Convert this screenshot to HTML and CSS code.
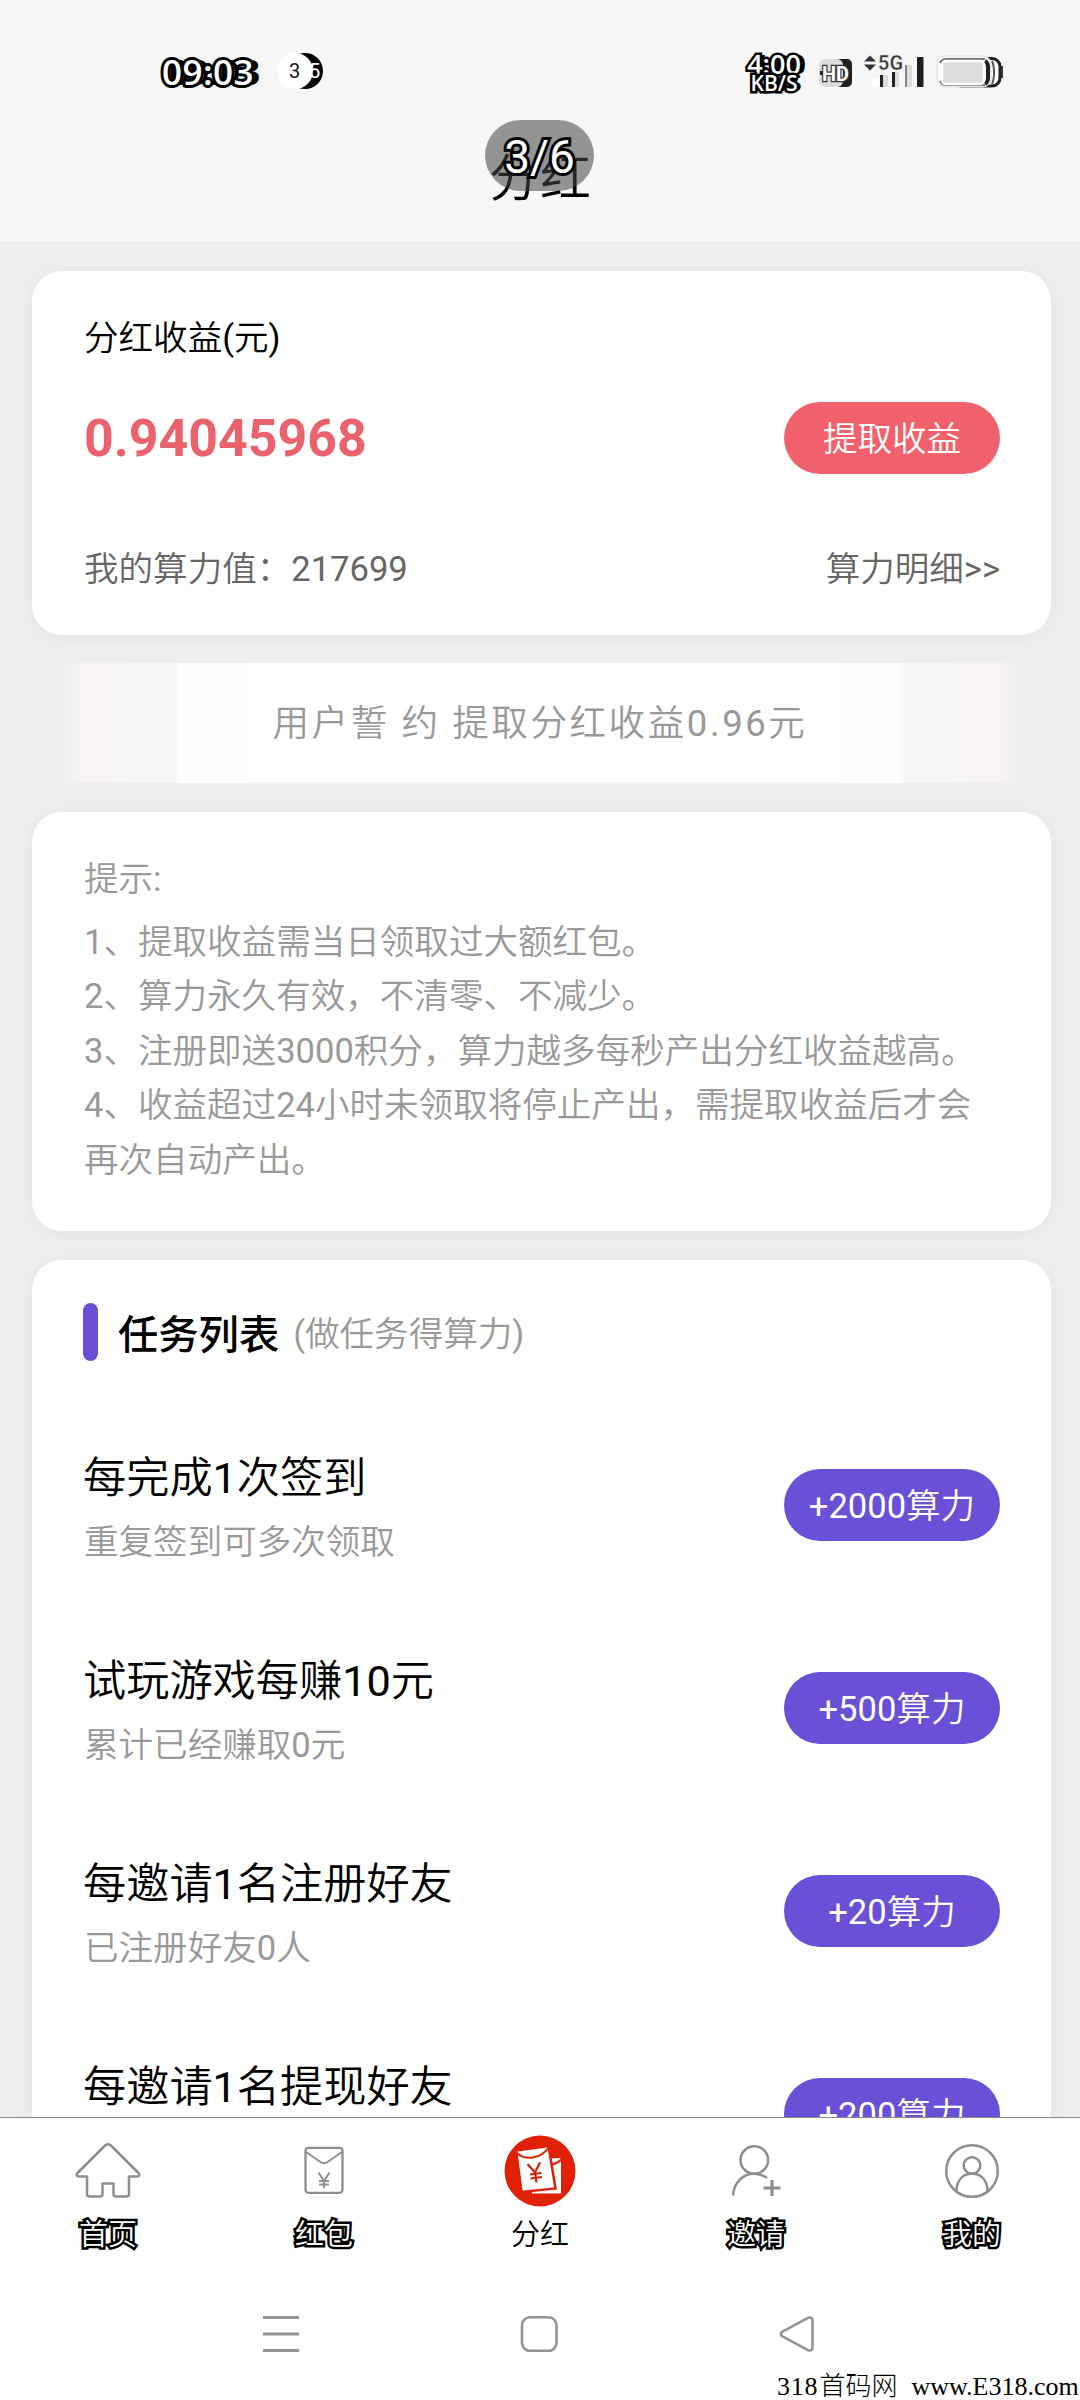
FILE: index.html
```html
<!DOCTYPE html>
<html lang="zh-CN">
<head>
<meta charset="utf-8">
<title>分红</title>
<link rel="stylesheet" href="styles.css">
</head>
<body>
<div class="screen">
  <header class="header">
    <div class="status">
      <span class="clock">09:03</span>
      <svg class="moon" width="50" height="40" viewBox="0 0 50 40">
        <circle cx="29" cy="20" r="18" fill="#050505"/>
        <text x="33" y="27" font-size="20" fill="#fff">5</text>
        <circle cx="19" cy="20" r="18" fill="#fff"/>
        <text x="13" y="26.500" font-size="20" fill="#111">3</text>
      </svg>
      <span class="speed"><b>4:00</b><i>KB/S</i></span>
      <svg class="signals" width="190" height="44" viewBox="0 0 190 44">
        <rect x="9" y="9" width="30" height="28" rx="5" fill="#202020"/>
        <rect x="6" y="9" width="24" height="28" rx="6" fill="#ddd"/>
        <path d="M7 23h6" stroke="#222" stroke-width="4"/>
        <text x="9" y="30.500" font-size="21" font-weight="700" fill="#fff" stroke="#333" stroke-width="2.500" paint-order="stroke" textLength="27" lengthAdjust="spacingAndGlyphs">HD</text>
        <path d="M51 11.500l6-6 6 6zM51 14.500l6 6 6-6z" fill="#333"/>
        <text x="65" y="20" font-size="20" font-weight="700" fill="#333" stroke="#ddd" stroke-width=".6">5G</text>
        <rect x="59" y="28" width="7" height="9" fill="#fff"/>
        <path d="M68 25h7v12h-7zM80 22h6v15h-6zM92 15h7v22h-7z" fill="#ddd"/>
        <path d="M67 25h3v12h-3zM79 22h3v15h-3z" fill="#222"/>
        <path d="M92 15h2v22h-2z" fill="#888"/>
        <rect x="104" y="7" width="6.500" height="30" rx="1" fill="#1d1d1d"/>
        <rect x="140" y="8.500" width="47" height="27.500" rx="8" fill="#fff" stroke="#222" stroke-width="3"/>
        <rect x="124" y="6" width="54" height="31" rx="8" fill="#f8f8f8" stroke="#ddd" stroke-width="1"/>
        <path d="M127 13q2-4 6-4h39M127 31q2 4 6 4h39" fill="none" stroke="#777" stroke-width="2"/>
        <path d="M172 11q3 2 3 6v11q0 4-3 6" fill="none" stroke="#222" stroke-width="4"/>
        <path d="M179 11q2 4 2 11.500t-2 11.500" fill="none" stroke="#555" stroke-width="2"/>
        <rect x="129" y="11" width="42" height="23" rx="4" fill="#ddd" stroke="#fff" stroke-width="2.500"/>
        <rect x="188" y="16" width="2" height="12" fill="#333"/>
      </svg>
    </div>
    <div class="titlebar">
      <h1>分红</h1>
      <div class="counter">3/6</div>
    </div>
  </header>

  <main class="content">
    <section class="card income">
      <div class="label">分红收益(元)</div>
      <div class="row amount-row">
        <strong class="amount">0.94045968</strong>
        <button class="pill red">提取收益</button>
      </div>
      <div class="row power">
        <span>我的算力值：217699</span>
        <a>算力明细&gt;&gt;</a>
      </div>
    </section>

    <div class="notice">用户誓 约 提取分红收益0.96元</div>

    <section class="card tips">
      <h2>提示:</h2>
      <p>1、提取收益需当日领取过大额红包。</p>
      <p>2、算力永久有效，不清零、不减少。</p>
      <p>3、注册即送3000积分，算力越多每秒产出分红收益越高。</p>
      <p>4、收益超过24小时未领取将停止产出，需提取收益后才会再次自动产出。</p>
    </section>

    <section class="card tasks">
      <div class="tasks-head"><span class="bar"></span><h2>任务列表</h2><span class="hint">(做任务得算力)</span></div>
      <div class="task">
        <div class="info"><h3>每完成1次签到</h3><p>重复签到可多次领取</p></div>
        <button class="pill">+2000算力</button>
      </div>
      <div class="task">
        <div class="info"><h3>试玩游戏每赚10元</h3><p>累计已经赚取0元</p></div>
        <button class="pill">+500算力</button>
      </div>
      <div class="task">
        <div class="info"><h3>每邀请1名注册好友</h3><p>已注册好友0人</p></div>
        <button class="pill">+20算力</button>
      </div>
      <div class="task">
        <div class="info"><h3>每邀请1名提现好友</h3><p>&nbsp;</p></div>
        <button class="pill">+200算力</button>
      </div>
    </section>
  </main>

  <nav class="tabs">
    <a class="tab">
      <svg width="72" height="72" viewBox="0 0 72 72" fill="none" stroke="#8e8e8e" stroke-width="2.500" stroke-linejoin="round"><path d="M33 10.500q3-2.500 6 0L66.500 38q2 3-1 3.500H57V59q0 2.500-2.500 2.500H44q-2.500 0-2.500-2.500V48.500h-11V59q0 2.500-2.500 2.500H17.500Q15 61.500 15 59V41.500H6.500q-3-.5-1-3.500z"/></svg>
      <span>首页</span>
    </a>
    <a class="tab">
      <svg width="72" height="72" viewBox="0 0 72 72" fill="none" stroke="#8e8e8e" stroke-width="2.300"><rect x="17.500" y="12.800" width="37" height="45" rx="3"/><path d="M18 17l14.500 10q3.500 2.500 7 0L54 17M30.500 37.500l5.500 8.500 5.500-8.500M36 46v7M31 46h10M31 49.500h10" stroke-width="2"/></svg>
      <span>红包</span>
    </a>
    <a class="tab active">
      <svg width="72" height="72" viewBox="0 0 72 72"><circle cx="36" cy="36" r="35.500" fill="#e12106"/><path d="M28 24l29-1V58.500H28z" fill="#fff"/><path d="M46 29.500q7 0 12-6" fill="none" stroke="#e12106" stroke-width="2"/><path d="M12 15.500L44.500 11l7 42.500L17.500 57z" fill="#fff" stroke="#e12106" stroke-width="2.500"/><path d="M13 18q6 6 16 4.500T45 12" fill="none" stroke="#e12106" stroke-width="2"/><path d="M23.500 29l7.500 8.500 5-10M31 37.500l1.500 10M26 39.500l11.500-1.500M26.500 43.500l11.500-1.500" fill="none" stroke="#cf2010" stroke-width="2.200"/></svg>
      <span>分红</span>
    </a>
    <a class="tab">
      <svg width="72" height="72" viewBox="0 0 72 72" fill="none" stroke="#8e8e8e" stroke-width="2.500"><circle cx="34.300" cy="25" r="13.800"/><path d="M13 60.500C14 47 23 38.800 34.300 38.800q7 0 12.700 4.200"/><path d="M52 45v16M43.500 53h17" stroke-width="3.200"/></svg>
      <span>邀请</span>
    </a>
    <a class="tab">
      <svg width="72" height="72" viewBox="0 0 72 72" fill="none" stroke="#8e8e8e" stroke-width="2.500"><circle cx="36" cy="36" r="25.800"/><circle cx="36" cy="30.500" r="8.300"/><path d="M20.500 56.500C20.500 46 26 38.800 36 38.800S51.500 46 51.500 56.500"/></svg>
      <span>我的</span>
    </a>
  </nav>

  <footer class="sysnav">
    <svg width="40" height="40" viewBox="0 0 40 40" stroke="#949494" stroke-width="3"><path d="M2 3.500h36M2 20h36M2 36.500h36"/></svg>
    <svg width="40" height="40" viewBox="0 0 40 40" fill="none" stroke="#949494" stroke-width="2.600"><rect x="2" y="3.300" width="34.500" height="33.500" rx="8"/></svg>
    <svg width="40" height="40" viewBox="0 0 40 40" fill="none" stroke="#949494" stroke-width="2.600" stroke-linejoin="round"><path d="M4.500 17.700L30 3.800q4.500-1.500 4.500 3v26.400q0 4.500-4.500 3L4.500 22.300q-3.500-2.300 0-4.600z"/></svg>
  </footer>
  <div class="watermark"><span class="num">318</span><span class="site">首码网</span><span>www.E318.com</span></div>
</div>
</body>
</html>
```
FILE: styles.css
```css
* { box-sizing: border-box; margin: 0; padding: 0; }
body {
  width: 1080px;
  height: 2400px;
  font-family: Roboto, "Noto Sans CJK SC DemiLight", "Noto Sans CJK SC", sans-serif;
  font-size: 34.56px;
  color: #000;
  background: #fff;
  overflow: hidden;
}
.screen { position: relative; display: flex; flex-direction: column; height: 2400px; }
h1, h2, h3 { font-weight: 400; }

.header { flex: none; height: 242px; background: #f7f7f7; border-bottom: 1px solid #f3f3f3; }
.status { display: flex; align-items: center; height: 120px; padding: 24px 0 0 162px; }
.clock {
  width: 101px;
  font: 600 35px/40px "Open Sans", sans-serif;
  letter-spacing: 0.5px;
  color: #fff;
  -webkit-text-stroke: 6px #000;
  paint-order: stroke fill;
  text-shadow: 7px 0 #000;
}
.moon { margin-left: 13px; margin-bottom: 2px; }
.speed { display: flex; flex-direction: column; flex: none; width: 60px; margin-left: 418px; margin-right: 9px; margin-top: 2px; font-family: "Open Sans", sans-serif; color: #fff; }
.speed b, .speed i { font-style: normal; font-weight: 600; text-align: center; -webkit-text-stroke: 5px #000; paint-order: stroke fill; white-space: nowrap; }
.speed b { font-size: 27px; line-height: 20px; text-shadow: 5px 0 #000; }
.speed i { font-size: 21px; line-height: 19px; text-shadow: 4px 0 #000; }
.signals { flex: none; margin-bottom: 0; }

.titlebar { position: relative; display: flex; justify-content: center; }
.titlebar h1 { margin-top: 24px; font-size: 51px; line-height: 70px; }
.counter {
  position: absolute;
  left: 485px;
  top: 0;
  width: 109px;
  height: 71px;
  border-radius: 36px;
  background: rgba(70, 70, 70, 0.56);
  color: #fff;
  font-size: 46px;
  line-height: 75px;
  text-align: center;
  -webkit-text-stroke: 6px #000;
  paint-order: stroke fill;
}

.content { flex: none; height: 1875px; padding: 29px 29px 0 32px; background: #eeeeee; overflow: hidden; }
.card { padding: 0 51px 0 52px; background: #fff; border-radius: 30px; box-shadow: 0 2px 20px rgba(80, 20, 40, 0.05); }
.row { display: flex; justify-content: space-between; align-items: center; }

.income { padding-top: 43px; padding-bottom: 42px; }
.label { line-height: 48px; }
.amount-row { margin-top: 40px; height: 72px; }
.amount { font-size: 51.84px; font-weight: 700; color: #ea626c; }
.power { margin-top: 71px; line-height: 48px; color: #666; }

.pill {
  width: 216px;
  height: 72px;
  border: 0;
  border-radius: 36px;
  background: #6950d6;
  color: #fff;
  font: inherit;
  line-height: 74px;
}
.pill.red { background: #f0616b; }

.notice {
  height: 120px;
  margin: 28px 33px 29px 30px;
  line-height: 122px;
  font-size: 36.500px;
  letter-spacing: 2.600px;
  text-align: center;
  color: #999;
  background: linear-gradient(90deg, #f1eff1 0, #f7f3f7 2%, #f7f3f7 5%, #f6f6f6 7%, #f7f7f7 12%, #fff 12.500%, #fdfbfe 13%, #fdfbfe 19%, #fff 20%, #fff 81%, #fdfbfe 82%, #fdfbfe 87.500%, #f6f6f6 88.500%, #f6f6f6 93%, #f7f3f7 95%, #f7f3f7 98%, #f1eff1 100%);
}

.tips { padding-top: 40px; padding-bottom: 43px; line-height: 54.600px; color: #999; }
.tips h2 { margin-bottom: 8px; font-size: inherit; }

.tasks { margin-top: 29px; padding-top: 43px; }
.tasks-head { display: flex; align-items: center; height: 58px; margin-bottom: 43px; margin-left: -1px; }
.bar { width: 15px; height: 58px; border-radius: 8px; background: #6950d6; }
.tasks-head h2 { margin-left: 20px; font-size: 40.300px; font-weight: 500; font-family: Roboto, "Noto Sans CJK SC", sans-serif; }
.hint { margin-left: 14px; margin-top: -2px; color: #999; }
.task { display: flex; justify-content: space-between; align-items: center; height: 203px; }
.info { padding-top: 11px; line-height: 65px; }
.info h3 { margin-left: -1px; font-size: 43.200px; }
.info p { margin-top: -1px; color: #999; }

.tabs { display: grid; grid-template-columns: repeat(5, 1fr); height: 165px; border-top: 1px solid #888; background: #fff; }
.tab { display: flex; flex-direction: column; align-items: center; padding-top: 17px; font-size: 29px; }
.tab span {
  margin-top: 8px;
  line-height: 40px;
  color: #fff;
  -webkit-text-stroke: 5px #000;
  paint-order: stroke fill;
}
.tab.active span { color: #000; -webkit-text-stroke: 0; }

.sysnav { display: flex; justify-content: space-between; padding: 32px 262px 0 261px; height: 92px; }
.watermark {
  display: flex;
  align-items: baseline;
  height: 26px;
  margin-left: 777px;
  font-family: "Liberation Serif", "Noto Sans CJK SC", serif;
  font-size: 26px;
  line-height: 26px;
  white-space: nowrap;
}
.num { letter-spacing: 0.8px; }
.site { margin: 0 14px 0 1px; font-weight: 300; }
```
